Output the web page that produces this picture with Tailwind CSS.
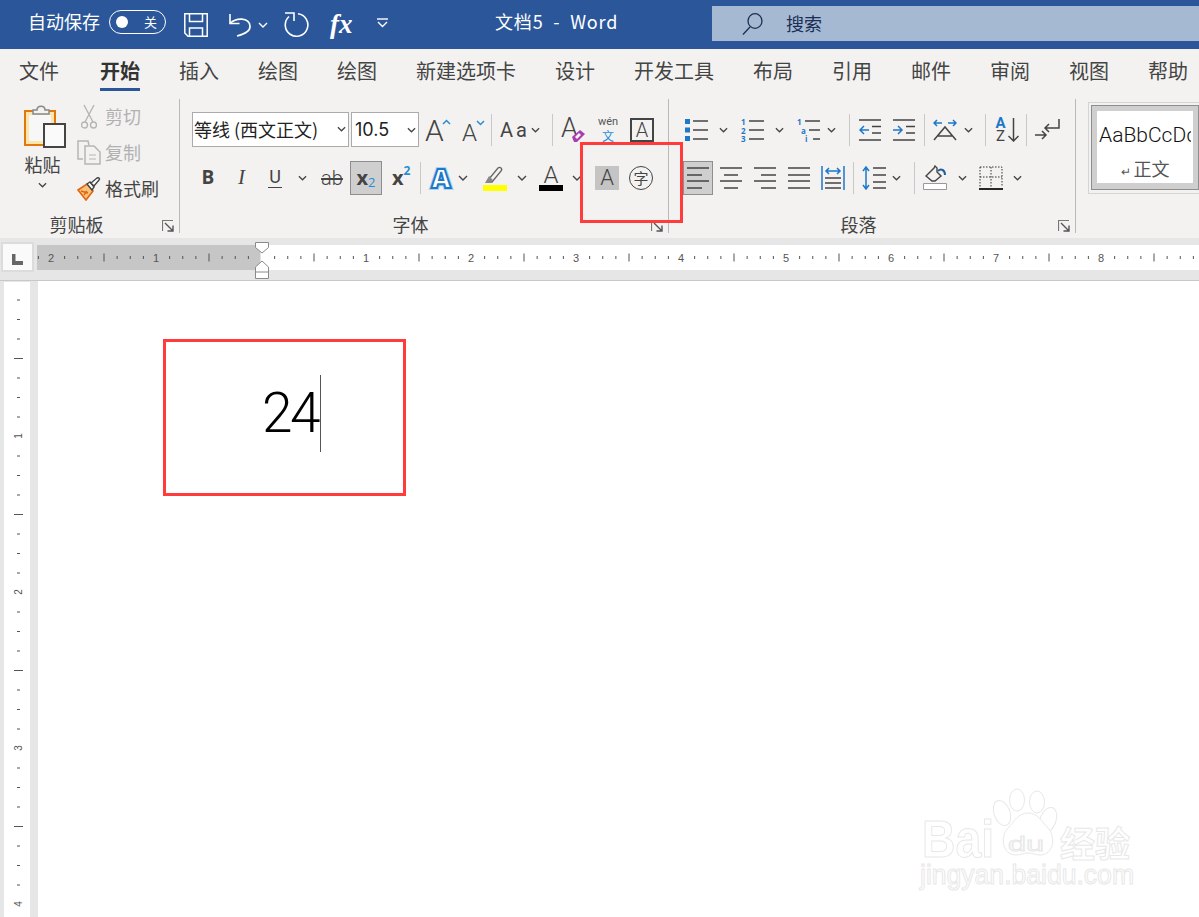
<!DOCTYPE html>
<html lang="en">
<head>
    <meta charset="UTF-8">
    <meta name="viewport" content="width=device-width, initial-scale=1.0">
    <title>文档5 - Word</title>
    <script src="https://cdn.jsdelivr.net/npm/@tailwindcss/browser@4"></script>
</head>
<body class="bg-white h-[917px] overflow-hidden font-['Noto_Sans_CJK_SC',sans-serif] text-[#444]">
    <!-- shared small icons -->
    <svg class="hidden">
        <symbol id="ch" viewBox="0 0 10 6"><path d="M1 1l4 4 4-4" fill="none" stroke="#444" stroke-width="1.4"/></symbol>
        <symbol id="launcher" viewBox="0 0 12 12"><path d="M.5 11V.5H11M.5 11" fill="none" stroke="#777" stroke-width="1.2"/><path d="M3 3l8 8M11 5.500V11H5.500" fill="none" stroke="#555" stroke-width="1.400"/></symbol>
    </svg>

    <!-- title bar -->
    <header class="h-[49px] bg-[#2b579a] flex items-center text-white relative">
        <span class="ml-[28px] w-[72px] mb-[6px] text-[18px] whitespace-nowrap">自动保存</span>
        <div class="ml-[9px] mb-[6px] w-[57px] h-[24px] border border-white rounded-full flex items-center justify-between pl-[6px] pr-[8px]">
            <span class="w-[12px] h-[12px] rounded-full bg-white"></span>
            <span class="text-[13px] leading-none">关</span>
        </div>
        <svg class="ml-[18px] w-[24px] h-[24px]" viewBox="0 0 24 24" fill="none" stroke="#fff" stroke-width="1.500"><path d="M.8.8h22.400v22.400H4L.8 20z"/><path d="M5.500 1v7.500h13V1M5.500 23v-8h13v8"/></svg>
        <svg class="ml-[20px] w-[24px] h-[24px]" viewBox="0 0 24 24" fill="none" stroke="#fff" stroke-width="1.600"><path d="M2 1v9.500h9.500"/><path d="M2 10.500C8 4.500 21 4 22 13c.5 5-5 8-13 10"/></svg>
        <svg class="ml-[6px] w-[10px] h-[6px]" viewBox="0 0 10 6"><path d="M1 1l4 4 4-4" fill="none" stroke="#fff" stroke-width="1.400"/></svg>
        <svg class="ml-[16px] w-[25px] h-[25px]" viewBox="0 0 25 25" fill="none" stroke="#fff" stroke-width="1.600"><path d="M5 4.500A11.300 11.300 0 1 0 14 1.700"/><path d="M1 1h9v8"/></svg>
        <span class="ml-[21px] w-[24px] font-['Liberation_Serif',serif] italic font-semibold text-[27px] leading-none">fx</span>
        <svg class="ml-[23px] mb-[4px] w-[11px] h-[10px]" viewBox="0 0 11 10" fill="none" stroke="#fff" stroke-width="1.400"><path d="M0 1h11"/><path d="M1 4l4.500 4.500L10 4"/></svg>
        <span class="ml-[107px] w-[122px] mb-[6px] text-[18px] tracking-[.85px] whitespace-pre">文档5  -  Word</span>
        <div class="ml-[95px] mb-[2px] w-[487px] h-[35px] bg-[#a5b9d3] flex items-center text-[#1b2f55]">
            <svg class="ml-[30px] w-[21px] h-[22px]" viewBox="0 0 21 22" fill="none" stroke="#1b2f55" stroke-width="1.300"><ellipse cx="13" cy="8" rx="7" ry="7.300"/><path d="M8 14L1 21.500"/></svg>
            <span class="ml-[23px] text-[18px]">搜索</span>
        </div>
    </header>

    <!-- tabs -->
    <nav class="h-[49px] bg-[#f3f2f1] flex items-start pl-[19px] pt-[7px] gap-[39px] text-[20px] leading-[30px] whitespace-nowrap text-[#444]">
        <span>文件</span>
        <span class="ml-[2px] font-bold border-b-[3px] border-[#2b579a] h-[35px] text-[#333]">开始</span>
        <span>插入</span>
        <span>绘图</span>
        <span>绘图</span>
        <span>新建选项卡</span>
        <span>设计</span>
        <span>开发工具</span>
        <span>布局</span>
        <span>引用</span>
        <span>邮件</span>
        <span>审阅</span>
        <span>视图</span>
        <span>帮助</span>
    </nav>

    <!-- ribbon -->
    <section class="h-[140px] bg-[#f3f2f1] flex relative pt-[1px] overflow-hidden">
        <!-- clipboard -->
        <div class="w-[180px] h-[134px] shrink-0 border-r border-[#b9b9b9] flex flex-col">
            <div class="h-[115px] flex">
                <div class="w-[77px] shrink-0 flex flex-col items-center pl-[8px]">
                    <svg class="mt-[5px] ml-[5px] w-[42px] h-[44px]" viewBox="0 0 42 44">
                        <path d="M1 7h30v34H1z" fill="#fde6ad" stroke="#e0780f" stroke-width="2"/>
                        <path d="M5 11h22v26H5z" fill="#f7f7f7"/>
                        <path d="M9 10V6h4c0-5 8-5 8 0h4v4z" fill="#f3f2f1" stroke="#888" stroke-width="1.500"/>
                        <path d="M20 20h21v23H20z" fill="#fafafa" stroke="#444" stroke-width="2"/>
                    </svg>
                    <span class="mt-[3px] text-[18px] leading-[26px] whitespace-nowrap">粘贴</span>
                    <svg class="mt-[5px] w-[9px] h-[6px]"><use href="#ch"/></svg>
                </div>
                <div class="flex flex-col pt-[5px] gap-[11px] text-[18px] leading-[25px] whitespace-nowrap">
                    <div class="h-[25px] flex items-center text-[#b1b1b1]">
                        <svg class="ml-[4px] mr-[8px] w-[16px] h-[25px]" viewBox="0 0 16 25" fill="none" stroke="#b5b5b5" stroke-width="1.400"><path d="M3 1l9 17M13 1L4 18"/><circle cx="3.500" cy="21" r="3"/><circle cx="12.500" cy="21" r="3"/></svg>
                        <span>剪切</span>
                    </div>
                    <div class="h-[25px] flex items-center text-[#b1b1b1]">
                        <svg class="mr-[4px] w-[24px] h-[25px]" viewBox="0 0 24 25" fill="none" stroke="#b5b5b5" stroke-width="1.500"><path d="M6 19H1V1h10l1 4"/><path d="M8 6h9l6 6v12H8z"/><path d="M12 15h7M12 19h7" stroke-width="1.200"/></svg>
                        <span>复制</span>
                    </div>
                    <div class="h-[25px] flex items-center text-[#444]">
                        <svg class="mr-[4px] w-[24px] h-[24px]" viewBox="0 0 24 24"><path d="M1 13l9-6 6 7-7 9z" fill="#f9c27c" stroke="#e0660f" stroke-width="1.600"/><path d="M4 14l7 2M7 18l3-4" stroke="#e0660f" stroke-width="1.400"/><path d="M10 7l3-2 4 5-2 3z" fill="#fff" stroke="#444" stroke-width="1.400"/><path d="M14 6l6-5c2-1 3 1 2 2l-5 6z" fill="#fff" stroke="#444" stroke-width="1.400"/></svg>
                        <span>格式刷</span>
                    </div>
                </div>
            </div>
            <div class="h-[19px] grid grid-cols-[1fr_auto_1fr] items-center pr-[5px] text-[18px] leading-[19px]">
                <span></span><span class="pr-[21px] pt-[1px]">剪贴板</span>
                <svg class="justify-self-end w-[12px] h-[12px] mt-[3px]"><use href="#launcher"/></svg>
            </div>
        </div>

        <!-- font -->
        <div class="w-[489px] h-[134px] shrink-0 border-r border-[#b9b9b9] flex flex-col">
            <div class="h-[115px] pl-[12px] pt-[13px] flex flex-col gap-[13px]">
                <div class="h-[35px] flex items-center">
                    <div class="w-[157px] h-[35px] shrink-0 bg-white border border-[#ababab] flex items-center pl-[1px] pr-[2px] text-[18px] leading-[30px] pb-[2px] text-[#222] whitespace-nowrap">
                        <span class="flex-1">等线 (西文正文)</span>
                        <svg class="w-[9px] h-[6px]"><use href="#ch"/></svg>
                    </div>
                    <div class="ml-[2px] w-[68px] h-[35px] shrink-0 bg-white border border-[#ababab] flex items-center pl-[3px] pr-[2px] text-[18px] text-[#222]">
                        <span class="flex-1 font-['Inter',sans-serif]">10.5</span>
                        <svg class="w-[9px] h-[6px]"><use href="#ch"/></svg>
                    </div>
                    <svg class="ml-[6px] w-[26px] h-[26px] overflow-visible" viewBox="0 0 26 26"><text x="0" y="24" font-family="Roboto" font-weight="300" font-size="30" fill="#444">A</text><path d="M18 7l3.500-3.500L25 7" fill="none" stroke="#2a8dd4" stroke-width="1.500"/></svg>
                    <svg class="ml-[11px] w-[24px] h-[26px] overflow-visible" viewBox="0 0 24 26"><text x="0" y="24" font-family="Roboto" font-weight="300" font-size="24" fill="#444">A</text><path d="M15 4l3.500 3.500L22 4" fill="none" stroke="#2a8dd4" stroke-width="1.500"/></svg>
                    <span class="ml-[5px] w-px h-[32px] bg-[#c8c8c8]"></span>
                    <div class="ml-[8px] w-[40px] flex items-center justify-between">
                        <span class="font-['Roboto',sans-serif] text-[20px] tracking-[3px] whitespace-nowrap">Aa</span>
                        <svg class="w-[9px] h-[6px]"><use href="#ch"/></svg>
                    </div>
                    <span class="ml-[12px] w-px h-[32px] bg-[#c8c8c8]"></span>
                    <svg class="ml-[8px] w-[25px] h-[26px] overflow-visible" viewBox="0 0 25 26"><text x="0" y="20" font-family="Roboto" font-weight="300" font-size="27" fill="#444">A</text><path d="M11 20l8-7 5 4-8 8h-3z" fill="#a83db0"/><path d="M14 20l4-4 2 2-4 4z" fill="#f3f2f1"/></svg>
                    <div class="ml-[11px] w-[22px] h-[30px] flex flex-col items-center text-[#555] leading-none">
                        <span class="font-['Roboto',sans-serif] text-[11px] h-[14px] leading-[14px]">wén</span>
                        <span class="text-[12px] text-[#2a8dd4] h-[14px] leading-[14px]">文</span>
                    </div>
                    <div class="ml-[11px] w-[24px] h-[24px] border-2 border-[#444] flex items-center justify-center font-['Roboto',sans-serif] font-light text-[20px] leading-none">A</div>
                </div>
                <div class="h-[35px] flex items-center">
                    <span class="ml-[8px] w-[16px] text-center font-['Open_Sans',sans-serif] font-bold text-[19px] leading-none">B</span>
                    <span class="ml-[19px] w-[13px] text-center font-['Liberation_Serif',serif] italic text-[21px] leading-none">I</span>
                    <span class="ml-[20px] w-[14px] h-[20px] text-center border-b-[1.500px] border-[#444] font-['Roboto',sans-serif] text-[18px] leading-[18px]">U</span>
                    <svg class="ml-[16px] w-[9px] h-[6px]"><use href="#ch"/></svg>
                    <span class="ml-[13px] w-[24px] text-center line-through font-['Roboto',sans-serif] font-light text-[20px] leading-none">ab</span>
                    <div class="ml-[6px] w-[32px] h-[34px] bg-[#cfcfcf] border border-[#8e8e8e] flex items-center justify-center font-['Open_Sans',sans-serif] font-bold text-[20px] leading-none">
                        <span>x</span><span class="text-[13px] font-normal text-[#2a8dd4] leading-none mt-[10px]">2</span>
                    </div>
                    <div class="ml-[10px] w-[20px] flex font-['Open_Sans',sans-serif] font-bold text-[20px] leading-none">
                        <span>x</span><span class="text-[12px] text-[#2a8dd4] leading-none -mt-[3px]">2</span>
                    </div>
                    <span class="ml-[8px] w-px h-[32px] bg-[#c8c8c8]"></span>
                    <svg class="ml-[8px] w-[24px] h-[26px] overflow-visible" viewBox="0 0 24 26"><text x="12" y="23" text-anchor="middle" font-family="Open Sans" font-weight="800" font-size="27" fill="#fff" stroke="#a9d3f0" stroke-width="4">A</text><text x="12" y="23" text-anchor="middle" font-family="Open Sans" font-weight="800" font-size="27" fill="#fff" stroke="#1d78c9" stroke-width="2">A</text></svg>
                    <svg class="ml-[5px] w-[10px] h-[6px]"><use href="#ch"/></svg>
                    <svg class="ml-[15px] w-[24px] h-[26px]" viewBox="0 0 24 26"><path d="M6 14L15 3c2-2 5 1 3 3L9 17H4z" fill="#f3f2f1" stroke="#666" stroke-width="1.300"/><path d="M2 18l4-7 4 4-4 3z" fill="#888"/><path d="M0 20h24v6H0z" fill="#ffff00"/></svg>
                    <svg class="ml-[10px] w-[10px] h-[6px]"><use href="#ch"/></svg>
                    <div class="ml-[12px] w-[24px] h-[26px] flex flex-col items-center">
                        <span class="font-['Roboto',sans-serif] font-light text-[24px] leading-[20px] h-[20px]">A</span>
                        <span class="w-full h-[6px] bg-black"></span>
                    </div>
                    <svg class="ml-[9px] w-[10px] h-[6px]"><use href="#ch"/></svg>
                    <div class="ml-[13px] w-[24px] h-[24px] bg-[#c4c4c4] flex items-center justify-center font-['Roboto',sans-serif] font-light text-[22px] leading-none">A</div>
                    <div class="ml-[10px] w-[24px] h-[24px] rounded-full border-[1.500px] border-[#444] flex items-center justify-center text-[15px] leading-none">字</div>
                </div>
            </div>
            <div class="h-[19px] grid grid-cols-[1fr_auto_1fr] items-center pr-[5px] text-[18px] leading-[19px]">
                <span></span><span class="pr-[22px] pt-[1px]">字体</span>
                <svg class="justify-self-end w-[12px] h-[12px] mt-[4px]"><use href="#launcher"/></svg>
            </div>
        </div>

        <!-- paragraph -->
        <div class="w-[407px] h-[134px] shrink-0 border-r border-[#b9b9b9] flex flex-col">
            <div class="h-[115px] pt-[13px] flex flex-col gap-[13px]">
                <div class="h-[35px] flex items-center">
                    <svg class="ml-[16px] w-[23px] h-[24px]" viewBox="0 0 23 24"><path d="M0 1h5v5H0zM0 9.500h5v5H0zM0 18h5v5H0z" fill="#1d78c9"/><path d="M8 3h15M8 12h15M8 21h15" stroke="#444" stroke-width="1.500"/></svg>
                    <svg class="ml-[11px] w-[9px] h-[6px]"><use href="#ch"/></svg>
                    <svg class="ml-[13px] w-[23px] h-[24px] overflow-visible" viewBox="0 0 23 24"><text x="0" y="7" font-family="Open Sans" font-weight="700" font-size="8" fill="#1d78c9">1</text><text x="0" y="15.500" font-family="Open Sans" font-weight="700" font-size="8" fill="#1d78c9">2</text><text x="0" y="24" font-family="Open Sans" font-weight="700" font-size="8" fill="#1d78c9">3</text><path d="M8 3h15M8 12h15M8 21h15" stroke="#444" stroke-width="1.500"/></svg>
                    <svg class="ml-[11px] w-[9px] h-[6px]"><use href="#ch"/></svg>
                    <svg class="ml-[13px] w-[23px] h-[24px] overflow-visible" viewBox="0 0 23 24"><text x="0" y="7" font-family="Open Sans" font-weight="700" font-size="8" fill="#1d78c9">1</text><text x="4" y="15.500" font-family="Open Sans" font-weight="700" font-size="8" fill="#1d78c9">a</text><text x="8" y="24" font-family="Open Sans" font-weight="700" font-size="8" fill="#1d78c9">i</text><path d="M8 3h15M12 12h11M16 21h7" stroke="#444" stroke-width="1.500"/></svg>
                    <svg class="ml-[7px] w-[9px] h-[6px]"><use href="#ch"/></svg>
                    <span class="ml-[13px] w-px h-[32px] bg-[#c8c8c8]"></span>
                    <svg class="ml-[9px] w-[22px] h-[22px]" viewBox="0 0 22 22" fill="none"><path d="M0 1h22M13 7.500h9M13 14h9M0 21h22" stroke="#444" stroke-width="1.500"/><path d="M10 11H1M5 7l-4 4 4 4" stroke="#1d78c9" stroke-width="1.500"/></svg>
                    <svg class="ml-[12px] w-[22px] h-[22px]" viewBox="0 0 22 22" fill="none"><path d="M0 1h22M13 7.500h9M13 14h9M0 21h22" stroke="#444" stroke-width="1.500"/><path d="M0 11h9M5 7l4 4-4 4" stroke="#1d78c9" stroke-width="1.500"/></svg>
                    <span class="ml-[9px] w-px h-[32px] bg-[#c8c8c8]"></span>
                    <svg class="ml-[8px] w-[24px] h-[22px]" viewBox="0 0 24 22" fill="none"><path d="M1 21L12 8l11 13M5 17h14" stroke="#444" stroke-width="1.500"/><path d="M1 4h8M4 1L1 4l3 3M15 4h8M20 1l3 3-3 3" stroke="#1d78c9" stroke-width="1.500"/></svg>
                    <svg class="ml-[7px] w-[9px] h-[6px]"><use href="#ch"/></svg>
                    <span class="ml-[12px] w-px h-[32px] bg-[#c8c8c8]"></span>
                    <div class="ml-[8px] w-[25px] h-[26px] flex items-center">
                        <div class="w-[13px] flex flex-col items-center font-['Roboto',sans-serif] text-[15px] leading-[13px]"><span class="text-[#1d78c9] font-bold">A</span><span>Z</span></div>
                        <svg class="ml-[1px] w-[11px] h-[24px]" viewBox="0 0 11 24" fill="none" stroke="#444" stroke-width="1.500"><path d="M5.500 0v23M.5 18l5 5 5-5"/></svg>
                    </div>
                    <span class="ml-[7px] w-px h-[32px] bg-[#c8c8c8]"></span>
                    <svg class="ml-[8px] w-[25px] h-[24px]" viewBox="0 0 25 24" fill="none" stroke="#444" stroke-width="1.500"><path d="M24 1v9H10M14 6l-4 4 4 4"/><path d="M0 17h11M7 13l4 4-4 4"/></svg>
                </div>
                <div class="h-[35px] flex items-center">
                    <div class="ml-[14px] w-[30px] h-[34px] bg-[#cfcfcf] border border-[#8e8e8e] flex items-center justify-center">
                        <svg class="w-[22px] h-[22px]" viewBox="0 0 22 22"><path d="M0 1h22M0 8h15M0 14h22M0 21h15" stroke="#444" stroke-width="1.500"/></svg>
                    </div>
                    <svg class="ml-[7px] w-[22px] h-[22px]" viewBox="0 0 22 22"><path d="M0 1h22M4 8h14M0 14h22M4 21h14" stroke="#444" stroke-width="1.500"/></svg>
                    <svg class="ml-[12px] w-[22px] h-[22px]" viewBox="0 0 22 22"><path d="M0 1h22M7 8h15M0 14h22M7 21h15" stroke="#444" stroke-width="1.500"/></svg>
                    <svg class="ml-[12px] w-[22px] h-[22px]" viewBox="0 0 22 22"><path d="M0 1h22M0 8h22M0 14h22M0 21h22" stroke="#444" stroke-width="1.500"/></svg>
                    <svg class="ml-[11px] w-[24px] h-[24px]" viewBox="0 0 24 24" fill="none"><path d="M1 0v24M23 0v24M5 5h14M8 2L5 5l3 3M16 2l3 3-3 3" stroke="#1d78c9" stroke-width="1.500"/><path d="M4 12h16M4 17h16M4 22h16" stroke="#444" stroke-width="1.500"/></svg>
                    <span class="ml-[8px] w-px h-[32px] bg-[#c8c8c8]"></span>
                    <svg class="ml-[8px] w-[24px] h-[24px]" viewBox="0 0 24 24" fill="none"><path d="M4 1v22M1 5l3-4 3 4M1 19l3 4 3-4" stroke="#1d78c9" stroke-width="1.500"/><path d="M11 2h13M11 9h13M11 16h13M11 22h13" stroke="#444" stroke-width="1.500"/></svg>
                    <svg class="ml-[6px] w-[9px] h-[6px]"><use href="#ch"/></svg>
                    <span class="ml-[13px] w-px h-[32px] bg-[#c8c8c8]"></span>
                    <svg class="ml-[8px] w-[24px] h-[25px]" viewBox="0 0 24 25" fill="none"><path d="M3 11l8-8 1-2 2 2v4l4 4-6 5H9z" stroke="#444" stroke-width="1.400"/><path d="M15 6c3-3 7-1 7 4" stroke="#1d5f9f" stroke-width="2"/><path d="M.5 18.500h23v6H.5z" fill="#fff" stroke="#999"/></svg>
                    <svg class="ml-[11px] w-[9px] h-[6px]"><use href="#ch"/></svg>
                    <svg class="ml-[12px] w-[24px] h-[24px]" viewBox="0 0 24 24" fill="none"><path d="M1 1h22v20M1 1v20M12 1v20M1 11h22" stroke="#333" stroke-dasharray="1.500 1.500"/><path d="M0 23h24" stroke="#111" stroke-width="1.800"/></svg>
                    <svg class="ml-[10px] w-[9px] h-[6px]"><use href="#ch"/></svg>
                </div>
            </div>
            <div class="h-[19px] grid grid-cols-[1fr_auto_1fr] items-center pr-[5px] text-[18px] leading-[19px]">
                <span></span><span class="pr-[22px] pt-[1px]">段落</span>
                <svg class="justify-self-end w-[12px] h-[12px] mt-[3px]"><use href="#launcher"/></svg>
            </div>
        </div>

        <!-- styles -->
        <div class="flex-1 pl-[12px] pt-[3px] overflow-hidden">
            <div class="w-[130px] h-[92px] border border-[#d4d4d4] p-[2px]">
                <div class="w-[108px] h-[85px] bg-[#cfcfcf] border border-[#8e8e8e] p-[5px]">
                    <div class="w-[96px] h-[72px] bg-white flex flex-col items-center overflow-hidden">
                        <span class="mt-[11px] w-[92px] overflow-hidden whitespace-nowrap font-['Roboto',sans-serif] font-light text-[21px] leading-[26px] text-[#111]">AaBbCcDd</span>
                        <span class="mt-[8px] text-[18px] leading-[24px] text-[#555] whitespace-nowrap"><span class="text-[12px] mr-[3px]">↵</span>正文</span>
                    </div>
                </div>
            </div>
        </div>

        <!-- red highlight -->
        <div class="absolute left-[580px] top-[44px] w-[103px] h-[81px] border-[3px] border-[#ff3b3b]"></div>
    </section>

    <!-- horizontal ruler -->
    <div class="h-[43px] bg-[#e6e6e6] border-b border-[#c8c8c8] flex relative">
        <div class="w-[37px] shrink-0 pl-[1px] pt-[4px]">
            <div class="w-[33px] h-[30px] bg-white/80 border-2 border-[#dcdcdc] flex items-center justify-center">
                <svg class="w-[11px] h-[11px] mt-[4px]" viewBox="0 0 11 11"><path d="M0 0h3.500v7H11v4H0z" fill="#666"/></svg>
            </div>
        </div>
        <div class="flex-1 mt-[7px] h-[25px] bg-white overflow-hidden">
            <svg id="hruler" width="1162" height="25"></svg>
        </div>
        <svg class="absolute left-[255px] top-[4px] w-[14px] h-[37px]" viewBox="0 0 14 37" fill="#fff" stroke="#8a8a8a" stroke-width="1"><path d="M.5.500h13v5L7 11 .5 5.500z"/><path d="M7 19l6.500 6v11.500H.5V25zM.5 30h13"/></svg>
    </div>

    <!-- document -->
    <main class="h-[636px] flex overflow-hidden">
        <aside class="w-[38px] shrink-0 bg-[#e6e6e6] pl-[4px] pt-[1px]">
            <svg id="vruler" class="bg-white" width="26" height="640"></svg>
        </aside>
        <div class="flex-1 bg-white relative">
            <!-- red box around the number -->
            <div class="absolute left-[125px] top-[58px] w-[243px] h-[157px] border-[3px] border-[#ff3b3b]"></div>
            <div class="absolute left-[224px] top-[94px] h-[77px] flex items-center">
                <span class="font-['Roboto',sans-serif] font-light text-[55px] leading-none tracking-[-2.500px] text-black">24</span>
                <span class="ml-[2px] w-px h-[77px] bg-[#555]"></span>
            </div>
            <!-- watermark -->
            <svg class="absolute left-[872px] top-[500px] w-[230px] h-[125px]" viewBox="0 0 230 125" fill="#fff" stroke="#e8e8e8">
                <text x="12" y="76" font-family="Liberation Sans" font-weight="700" font-size="51" textLength="72" lengthAdjust="spacingAndGlyphs">Bai</text>
                <ellipse cx="92" cy="32" rx="8" ry="13" transform="rotate(-20 92 32)"/>
                <ellipse cx="107" cy="19" rx="7.500" ry="11"/>
                <ellipse cx="127" cy="21" rx="7.500" ry="11"/>
                <ellipse cx="138" cy="39" rx="8" ry="13" transform="rotate(20 138 39)"/>
                <path d="M118 32c10 0 14 9 20 15 8 8 6 27-8 27-5 0-7-2-12-2s-7 2-12 2c-14 0-16-19-8-27 6-6 10-15 20-15z"/>
                <text x="98" y="70" font-family="Liberation Sans" font-size="20" textLength="36" lengthAdjust="spacingAndGlyphs">du</text>
                <text x="150" y="76" font-family="Noto Sans CJK SC" font-weight="700" font-size="35">经验</text>
                <text x="10" y="103" font-family="Liberation Sans" font-size="27" textLength="214" lengthAdjust="spacingAndGlyphs">jingyan.baidu.com</text>
            </svg>
        </div>
    </main>

    <script>
        // ruler ticks, one inch is 105px across and 156px down
        function buildRulers() {
            let h = '<rect x="0" y="0" width="223.500" height="25" fill="#c6c6c6"/>';
            for (let i = -17; i <= 72; i++) {
                const x = 224 + i * 13.125;
                if (i === 0) continue;
                if (i % 8 === 0) {
                    h += `<text x="${x}" y="16.500" text-anchor="middle" font-family="Liberation Sans" font-size="11" fill="#555">${Math.abs(i / 8)}</text>`;
                } else if (i % 4 === 0) {
                    h += `<rect x="${x}" y="8.500" width="1" height="8" fill="#555"/>`;
                } else {
                    h += `<rect x="${x}" y="11" width="1" height="3" fill="#555"/>`;
                }
            }
            document.getElementById('hruler').innerHTML = h;

            let v = '';
            for (let i = 1; i <= 32; i++) {
                const y = i * 19.5 - 2;
                if (i % 8 === 0) {
                    v += `<text x="14" y="${y + 4}" text-anchor="middle" font-family="Liberation Sans" font-size="10" fill="#555" transform="rotate(-90 14 ${y})">${i / 8}</text>`;
                } else if (i % 4 === 0) {
                    v += `<rect x="10" y="${y}" width="9" height="1" fill="#555"/>`;
                } else {
                    v += `<rect x="13" y="${y}" width="3" height="1" fill="#555"/>`;
                }
            }
            document.getElementById('vruler').innerHTML = v;
        }

        buildRulers();
    </script>
</body>
</html>
